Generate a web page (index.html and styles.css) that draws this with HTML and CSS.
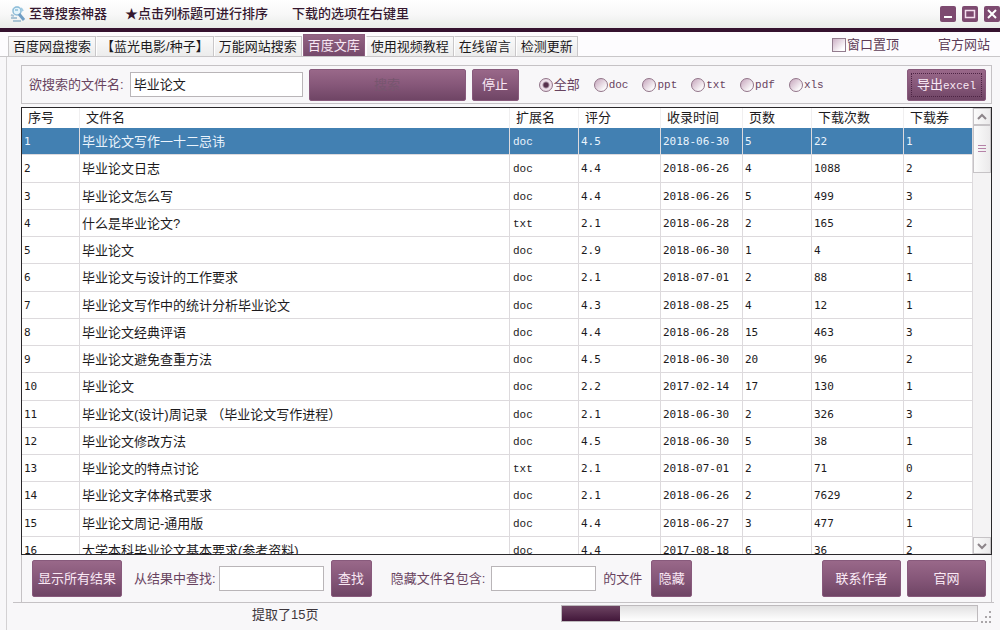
FILE: index.html
```html
<!DOCTYPE html>
<html lang="zh-CN">
<head>
<meta charset="utf-8">
<title>至尊搜索神器</title>
<link rel="stylesheet" href="styles.css">
</head>
<body>
<header class="titlebar">
  <svg class="logo" viewBox="0 0 16 18" aria-hidden="true">
    <path d="M2 4Q5 0 10 2L12 6 9 10 4 9Z" fill="#c3e0ef"/>
    <circle cx="7" cy="6" r="4" fill="#e4f4fb" stroke="#8fbdd8" stroke-width="1.5"/>
    <path d="M9 9l5 6" stroke="#6f9dc4" stroke-width="3"/>
    <path d="M1 13h6M3 16h8M1 10l3 1" stroke="#a9c3d4" stroke-width="2"/>
    <path d="M11 3l2 3M5 5h3" stroke="#a2cbe2" stroke-width="2"/>
  </svg>
  <h1 class="app-name">至尊搜索神器</h1>
  <span class="hint">★点击列标题可进行排序</span>
  <span class="hint hint-menu">下载的选项在右键里</span>
  <div class="window-buttons">
    <button class="win" aria-label="最小化"><svg viewBox="0 0 16 16"><path d="M4 11h8" stroke="#fff" stroke-width="2"/></svg></button>
    <button class="win" aria-label="最大化"><svg viewBox="0 0 16 16"><path d="M3.5 4.5h9v7h-9z" fill="none" stroke="#f3dfee" stroke-width="1.5"/></svg></button>
    <button class="win" aria-label="关闭"><svg viewBox="0 0 16 16"><path d="M4 4l8 8M12 4l-8 8" stroke="#fff" stroke-width="2"/></svg></button>
  </div>
</header>
<nav class="tabbar">
  <button class="tab">百度网盘搜索</button>
  <button class="tab">【蓝光电影/种子】</button>
  <button class="tab">万能网站搜索</button>
  <button class="tab active">百度文库</button>
  <button class="tab">使用视频教程</button>
  <button class="tab">在线留言</button>
  <button class="tab">检测更新</button>
  <label class="pin"><input type="checkbox" class="check">窗口置顶</label>
  <a class="site" href="#">官方网站</a>
</nav>
<main class="page">
  <form class="search">
    <label for="q">欲搜索的文件名:</label>
    <input id="q" class="text query" type="text" value="毕业论文">
    <button class="btn go" type="button" disabled>搜索</button>
    <button class="btn stop" type="button">停止</button>
    <div class="types">
      <label><input type="radio" name="t" checked>全部</label>
      <label class="latin"><input type="radio" name="t">doc</label>
      <label class="latin"><input type="radio" name="t">ppt</label>
      <label class="latin"><input type="radio" name="t">txt</label>
      <label class="latin"><input type="radio" name="t">pdf</label>
      <label class="latin"><input type="radio" name="t">xls</label>
    </div>
    <button class="btn export" type="button"><span class="focus">导出<span class="latin">excel</span></span></button>
  </form>
  <section class="results">
    <div class="viewport">
      <table class="grid">
        <colgroup><col class="c-no"><col><col class="c-s"><col class="c-m"><col class="c-m"><col class="c-s"><col class="c-l"><col class="c-s"></colgroup>
        <thead><tr><th>序号</th><th>文件名</th><th>扩展名</th><th>评分</th><th>收录时间</th><th>页数</th><th>下载次数</th><th>下载券</th></tr></thead>
        <tbody>
          <tr class="selected"><td>1</td><td>毕业论文写作一十二忌讳</td><td>doc</td><td>4.5</td><td>2018-06-30</td><td>5</td><td>22</td><td>1</td></tr>
          <tr><td>2</td><td>毕业论文日志</td><td>doc</td><td>4.4</td><td>2018-06-26</td><td>4</td><td>1088</td><td>2</td></tr>
          <tr><td>3</td><td>毕业论文怎么写</td><td>doc</td><td>4.4</td><td>2018-06-26</td><td>5</td><td>499</td><td>3</td></tr>
          <tr><td>4</td><td>什么是毕业论文?</td><td>txt</td><td>2.1</td><td>2018-06-28</td><td>2</td><td>165</td><td>2</td></tr>
          <tr><td>5</td><td>毕业论文</td><td>doc</td><td>2.9</td><td>2018-06-30</td><td>1</td><td>4</td><td>1</td></tr>
          <tr><td>6</td><td>毕业论文与设计的工作要求</td><td>doc</td><td>2.1</td><td>2018-07-01</td><td>2</td><td>88</td><td>1</td></tr>
          <tr><td>7</td><td>毕业论文写作中的统计分析毕业论文</td><td>doc</td><td>4.3</td><td>2018-08-25</td><td>4</td><td>12</td><td>1</td></tr>
          <tr><td>8</td><td>毕业论文经典评语</td><td>doc</td><td>4.4</td><td>2018-06-28</td><td>15</td><td>463</td><td>3</td></tr>
          <tr><td>9</td><td>毕业论文避免查重方法</td><td>doc</td><td>4.5</td><td>2018-06-30</td><td>20</td><td>96</td><td>2</td></tr>
          <tr><td>10</td><td>毕业论文</td><td>doc</td><td>2.2</td><td>2017-02-14</td><td>17</td><td>130</td><td>1</td></tr>
          <tr><td>11</td><td>毕业论文(设计)周记录 （毕业论文写作进程）</td><td>doc</td><td>2.1</td><td>2018-06-30</td><td>2</td><td>326</td><td>3</td></tr>
          <tr><td>12</td><td>毕业论文修改方法</td><td>doc</td><td>4.5</td><td>2018-06-30</td><td>5</td><td>38</td><td>1</td></tr>
          <tr><td>13</td><td>毕业论文的特点讨论</td><td>txt</td><td>2.1</td><td>2018-07-01</td><td>2</td><td>71</td><td>0</td></tr>
          <tr><td>14</td><td>毕业论文字体格式要求</td><td>doc</td><td>2.1</td><td>2018-06-26</td><td>2</td><td>7629</td><td>2</td></tr>
          <tr><td>15</td><td>毕业论文周记-通用版</td><td>doc</td><td>4.4</td><td>2018-06-27</td><td>3</td><td>477</td><td>1</td></tr>
          <tr><td>16</td><td>大学本科毕业论文基本要求(参考资料)</td><td>doc</td><td>4.4</td><td>2017-08-18</td><td>6</td><td>36</td><td>2</td></tr>
        </tbody>
      </table>
    </div>
    <div class="scrollbar">
      <button class="arrow" aria-label="向上"><svg viewBox="0 0 10 8"><path d="M1 6l4-4 4 4" fill="none" stroke="#8c8489" stroke-width="2"/></svg></button>
      <div class="thumb"><svg viewBox="0 0 8 8"><path d="M0 .5h8M0 3.5h8M0 6.5h8" stroke="#b583a8"/></svg></div>
      <button class="arrow down" aria-label="向下"><svg viewBox="0 0 10 8"><path d="M1 2l4 4 4-4" fill="none" stroke="#8c8489" stroke-width="2"/></svg></button>
    </div>
  </section>
  <form class="filters">
    <button class="btn all" type="button">显示所有结果</button>
    <label class="find-label" for="find">从结果中查找:</label>
    <input id="find" class="text small" type="text">
    <button class="btn act" type="button">查找</button>
    <label class="hide-label" for="hide">隐藏文件名包含:</label>
    <input id="hide" class="text small" type="text">
    <span class="suffix">的文件</span>
    <button class="btn act hide" type="button">隐藏</button>
    <button class="btn link contact" type="button">联系作者</button>
    <button class="btn link" type="button">官网</button>
  </form>
</main>
<footer class="status">
  <div class="status-row">
    <span class="message">提取了15页</span>
    <progress class="bar" max="100" value="14" aria-label="进度"></progress>
    <svg class="grip" viewBox="0 0 12 12" aria-hidden="true"><path d="M9 0h2v2h-2zM9 5h2v2h-2zM9 10h2v2h-2zM5 5h2v2h-2zM5 10h2v2h-2zM1 10h2v2h-2z" fill="#aaa6a9"/></svg>
  </div>
</footer>
</body>
</html>
```

FILE: styles.css
```css
* { box-sizing: border-box; }

body {
  margin: 0;
  height: 100vh;
  display: flex;
  flex-direction: column;
  overflow: hidden;
  background: #f8f7f9;
  color: #1c1a1c;
  font: 13px/18px "Liberation Sans", "Noto Sans CJK SC", sans-serif;
  white-space: nowrap;
}

button, input { font: inherit; color: inherit; margin: 0; }
.latin { font-family: "Liberation Mono", "Noto Sans CJK SC", monospace; font-size: 11px; }

/* Title bar */
.titlebar {
  display: flex;
  align-items: center;
  height: 32px;
  padding: 0 0 0 10px;
  border-bottom: 4px solid #35122f;
  background: linear-gradient(#fff, #f8f8f8 50%, #e9ebe9);
  color: #35182f;
}
.logo { width: 16px; height: 18px; margin-right: 3px; }
.app-name { margin: 0 18px 0 0; font-size: 13px; font-weight: 500; }
.hint { font-weight: 500; }
.hint-menu { margin-left: 24px; }
.window-buttons { display: flex; gap: 6px; margin-left: auto; }
.win { width: 16px; height: 16px; padding: 0; border: 0; border-radius: 2px; background: #7d4a70; }
.win svg { display: block; }

/* Tabs */
.tabbar {
  display: flex;
  align-items: flex-end;
  height: 25px;
  padding: 0 10px 0 8px;
  border-bottom: 1px solid #c9c7c9;
  background: #fdfcfe;
}
.tab {
  height: 20px;
  padding: 0 4px;
  border: 1px solid #c9c7c9;
  border-bottom: 0;
  border-left-color: #fff;
  background: linear-gradient(#fafafa, #ececec);
  line-height: 18px;
}
.tab:first-child { border-left-color: #c9c7c9; }
.tab.active {
  height: 22px;
  margin: 0 1px;
  border-color: #8d5d7f;
  background: linear-gradient(#946484, #75496b);
  color: #f8e8f4;
  line-height: 20px;
}
.pin { display: flex; align-items: center; gap: 1px; margin-left: auto; height: 22px; color: #5e3c57; }
.check {
  appearance: none;
  width: 14px;
  height: 14px;
  border: 1px solid #937c8e;
  background: linear-gradient(135deg, #cdb1c6, #fff 80%);
}
.site { margin-left: 39px; line-height: 22px; color: #5e3c57; text-decoration: none; }

/* Page */
.page {
  flex: 1;
  min-height: 0;
  display: flex;
  flex-direction: column;
  margin-left: 6px;
  padding: 8px 8px 0 14px;
  border-left: 1px solid #d3d1d3;
}
.search {
  display: flex;
  align-items: center;
  height: 39px;
  margin-bottom: 3px;
  padding: 0 5px 0 7px;
  border: 1px solid #c5c2c5;
  color: #68435f;
}
.text { border: 1px solid #b9b5b8; background: #fff; color: #1c1a1c; outline: 0; }
.query { width: 173px; height: 25px; margin-left: 6px; padding: 0 3px 3px; }
.btn {
  flex: none;
  padding: 0;
  border: 1px solid #885a7c;
  border-radius: 2px;
  background: linear-gradient(#996889, #865779 50%, #6f4565);
  color: #fae9f5;
}
.go { width: 157px; height: 32px; margin-left: 6px; color: #77566f; }
.stop { width: 47px; height: 32px; margin-left: 6px; }
.types { display: flex; align-items: center; gap: 14px; margin-left: 20px; }
.types label { display: flex; align-items: center; gap: 1px; }
.types input {
  appearance: none;
  width: 14px;
  height: 14px;
  border: 1px solid #927489;
  border-radius: 50%;
  background: linear-gradient(135deg, #c5a4bb, #fff 85%);
}
.types input:checked { background: radial-gradient(circle, #56304c 0 2px, #f1e5ee 4px, #d9c1d1); }
.export { width: 79px; height: 32px; margin-left: auto; padding: 3px; }
.focus { display: block; height: 24px; border: 1px dotted #4d2444; line-height: 22px; }

/* Results */
.results {
  flex: 1;
  min-height: 0;
  display: flex;
  border: 1px solid #29272a;
  background: #fff;
}
.viewport { flex: 1; min-width: 0; overflow: hidden; }
.grid { width: 100%; height: 456px; table-layout: fixed; border-collapse: separate; border-spacing: 0; }
.c-no { width: 58px; }
.c-s { width: 69px; }
.c-m { width: 82px; }
.c-l { width: 92px; }
.grid th {
  height: 20px;
  padding: 0 0 0 6px;
  border-right: 1px solid #f0eff0;
  font-weight: 400;
  text-align: left;
  line-height: 18px;
}
.grid td {
  padding: 2px 0 0 2px;
  border: solid #dddadd;
  border-width: 0 1px 1px 0;
  font: 11px/18px "DejaVu Sans Mono", "Noto Sans CJK SC", monospace;
}
.grid td:nth-child(2) { font-family: "Liberation Sans", "Noto Sans CJK SC", sans-serif; font-size: 13px; }
.grid td:nth-child(3) { padding-left: 3px; font-family: "Liberation Mono", monospace; }
.selected td { background: #4280b2; color: #eaf4fd; }
.scrollbar { display: flex; flex-direction: column; width: 18px; background: #f4f3f4; }
.arrow, .thumb {
  display: flex;
  align-items: center;
  justify-content: center;
  padding: 0;
  border: 1px solid #c6c3c6;
  background: linear-gradient(90deg, #fbfbfb, #ebeaeb);
}
.arrow { height: 17px; }
.arrow svg { width: 10px; height: 8px; }
.thumb { height: 48px; }
.thumb svg { width: 8px; height: 8px; }
.down { margin-top: auto; }

/* Filters */
.filters {
  display: flex;
  align-items: center;
  height: 47px;
  padding: 0 5px 0 10px;
  border: solid #c5c2c5;
  border-width: 0 1px;
  color: #68435f;
}
.all { width: 90px; height: 37px; }
.find-label { margin-left: 12px; }
.small { width: 105px; height: 25px; }
.find-label + .small { margin-left: 3px; }
.hide-label + .small { margin-left: 6px; }
.act { width: 41px; height: 37px; margin-left: 7px; }
.hide-label { margin-left: 19px; }
.suffix { margin-left: 7px; }
.hide { margin-left: 9px; }
.link { width: 79px; height: 37px; margin-left: 6px; }
.contact { margin-left: auto; }

/* Status */
.status { height: 28px; margin-left: 6px; padding: 0 6px 0 6px; border-left: 1px solid #d3d1d3; }
.status-row { display: flex; padding-top: 2px; border-top: 1px solid #c5c2c5; }
.message { flex: 1; padding: 1px 0 0 239px; color: #3d363c; }
.bar {
  appearance: none;
  width: 417px;
  height: 17px;
  border: 1px solid #bebabd;
  background: #f6f5f6;
}
.bar::-webkit-progress-bar { background: linear-gradient(#e2e1e2, #fff); }
.bar::-webkit-progress-value { background: linear-gradient(#6d4462, #42173a); }
.grip { width: 12px; height: 12px; margin: 6px 2px 0 2px; }
```
